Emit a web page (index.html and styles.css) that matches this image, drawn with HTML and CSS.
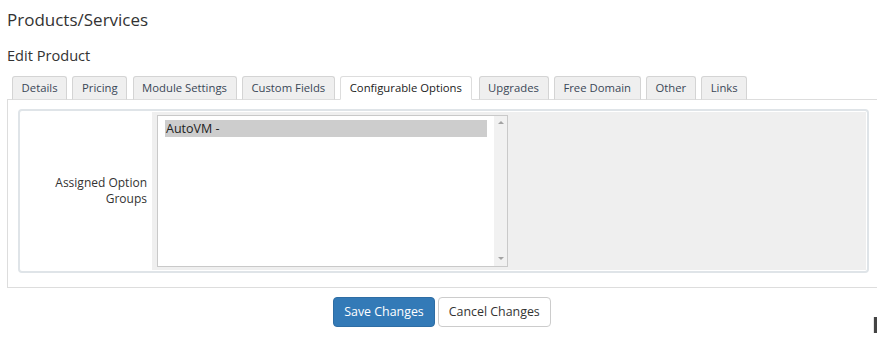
FILE: index.html
```html
<!DOCTYPE html>
<html>
<head>
<meta charset="utf-8">
<link rel="stylesheet" href="styles.css">
</head>
<body>
<div class="page">
  <h1 class="title">Products/Services</h1>
  <h2 class="subtitle">Edit Product</h2>
  <ul class="tabs">
    <li class="tab">Details</li>
    <li class="tab">Pricing</li>
    <li class="tab">Module Settings</li>
    <li class="tab">Custom Fields</li>
    <li class="tab active">Configurable Options</li>
    <li class="tab">Upgrades</li>
    <li class="tab">Free Domain</li>
    <li class="tab">Other</li>
    <li class="tab">Links</li>
  </ul>
  <div class="tabbox">
    <div class="optbox">
      <div class="label">Assigned Option Groups</div>
      <div class="field">
        <div class="select">
          <div class="list">
            <div class="option selected">AutoVM -</div>
          </div>
          <div class="scrollbar">
            <span class="arrow up"></span>
            <span class="arrow down"></span>
          </div>
        </div>
      </div>
    </div>
  </div>
  <div class="actions">
    <button class="btn primary">Save Changes</button>
    <button class="btn default">Cancel Changes</button>
  </div>
</div>
<div class="peek"></div>
</body>
</html>
```
FILE: styles.css
```css
html, body {
  margin: 0;
  padding: 0;
  overflow: hidden;
  background: #fff;
}
body {
  font-family: "Open Sans", "Noto Sans", sans-serif;
  color: #333;
}
.page {
  padding-left: 7px;
  width: 870px;
}
.title {
  margin: 8px 0 0;
  font-size: 17px;
  line-height: 24px;
  font-weight: 400;
  color: #333;
}
.subtitle {
  margin: 13px 0 0;
  font-size: 14.6px;
  line-height: 20px;
  font-weight: 400;
  color: #333;
}
.tabs {
  list-style: none;
  margin: 11px 0 0;
  padding: 0 0 0 5px;
  display: flex;
  width: 866px;
  border-bottom: 1px solid #ddd;
}
.tab {
  font-size: 11.3px;
  line-height: 22px;
  padding: 0 8.6px;
  margin-right: 5.3px;
  margin-bottom: -1px;
  background: #efefef;
  border: 1px solid #d4d4d4;
  border-bottom: 1px solid #ddd;
  border-radius: 3px 3px 0 0;
  color: #3a4757;
  white-space: nowrap;
}
.tab.active {
  background: #fff;
  border-color: #ddd;
  border-bottom-color: #fff;
  color: #222;
  margin-right: 7px;
}
.tabbox {
  box-sizing: border-box;
  width: 871px;
  border: 1px solid #ddd;
  border-top: none;
  padding: 9px 10px 14px;
}
.optbox {
  display: flex;
  border: 2px solid #dfe4e8;
  border-radius: 4px;
  padding: 1px;
  width: 845px;
}
.label {
  width: 131px;
  box-sizing: border-box;
  padding: 0 5px 0 12px;
  font-size: 12px;
  line-height: 16px;
  text-align: right;
  display: flex;
  align-items: center;
  justify-content: flex-end;
  color: #333;
}
.field {
  flex: 1;
  background: #efefef;
  padding: 3px 5px;
}
.select {
  display: flex;
  width: 351px;
  height: 152px;
  box-sizing: border-box;
  border: 1px solid #c9c9c9;
  background: #fff;
}
.list {
  flex: 1;
  padding: 4px 7px 0 7px;
}
.option {
  font-size: 12.5px;
  line-height: 17px;
  padding-left: 1px;
  color: #222;
}
.option.selected {
  background: #cdcdcd;
}
.scrollbar {
  width: 13px;
  background: #f1f1f1;
  display: flex;
  flex-direction: column;
  justify-content: space-between;
  align-items: center;
  padding: 5px 0 6px;
}
.arrow {
  width: 0;
  height: 0;
  border-left: 3px solid transparent;
  border-right: 3px solid transparent;
}
.arrow.up {
  border-bottom: 3px solid #a3a3a3;
}
.arrow.down {
  border-top: 3px solid #a3a3a3;
}
.actions {
  display: flex;
  justify-content: center;
  gap: 3px;
  margin-top: 9px;
}
.btn {
  font-family: "Open Sans", "Noto Sans", sans-serif;
  font-size: 12.4px;
  height: 30px;
  padding: 0 10px;
  border-radius: 4px;
  border: 1px solid #ccc;
  line-height: 28px;
}
.btn.primary {
  background: #337ab7;
  border-color: #2e6da4;
  color: #fff;
}
.btn.default {
  background: #fff;
  color: #333;
}
.peek {
  position: fixed;
  left: 873px;
  top: 317px;
  width: 3px;
  height: 16px;
  background: #444;
  border-left: 1px solid #e6e6e6;
}
```
